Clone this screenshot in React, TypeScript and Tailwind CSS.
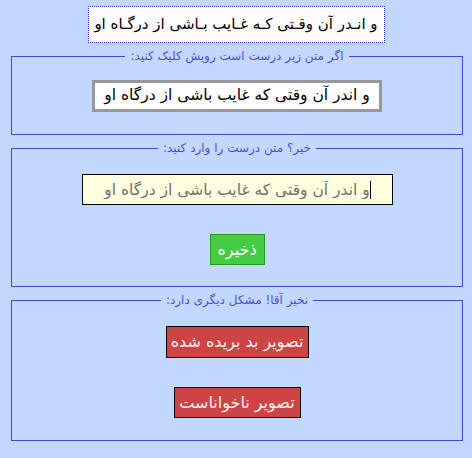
import React from "react";

export default function App() {
  return (
    <div
      dir="rtl"
      className="min-h-[458px] w-full bg-[#c3d8ff] pt-[6px] pb-[17px]"
      style={{ fontFamily: '"DejaVu Sans", Tahoma, sans-serif' }}
    >
      <div className="mx-auto flex h-[37px] w-[297px] items-center justify-center whitespace-nowrap border border-dotted border-[#2a2ae0] bg-white text-[15px] text-black">
        و انـدر آن وقـتی کـه غـایب بـاشی از درگـاه او
      </div>

      <fieldset className="mt-[7px] ml-[11px] mr-[9px] border border-[#4848d8] px-2 pt-[17px] pb-[22px]">
        <legend className="mx-auto px-[5px] text-[12px] leading-[13px] text-[#5050d0]">
          اگر متن زیر درست است رویش کلیک کنید:
        </legend>
        <div className="flex justify-center">
          <button className="flex h-[32px] w-[290px] items-center justify-center whitespace-nowrap border-[3px] border-[#999999] bg-white text-[15.5px] text-black">
            و اندر آن وقتی که غایب باشی از درگاه او
          </button>
        </div>
      </fieldset>

      <fieldset className="mt-[7px] ml-[11px] mr-[9px] border border-[#4848d8] px-2 pt-[19px] pb-[21px]">
        <legend className="mx-auto px-[5px] text-[12px] leading-[13px] text-[#5050d0]">
          خیر؟ متن درست را وارد کنید:
        </legend>
        <div className="flex flex-col items-center">
          <div className="relative">
            <input
              dir="rtl"
              defaultValue="و اندر آن وقتی که غایب باشی از درگاه او"
              className="h-[31px] w-[311px] border border-black bg-[#ffffe0] text-center text-[15.5px] text-[#707070] outline-none"
              style={{ fontFamily: '"DejaVu Sans", Tahoma, sans-serif' }}
            />
            <span className="absolute right-[22px] top-[7px] h-[18px] w-px bg-black" />
          </div>
          <button className="mt-[29px] flex h-[31px] w-[55px] items-center justify-center border border-[#20a020] bg-[#44cc44] text-[16px] text-white">
            ذخیره
          </button>
        </div>
      </fieldset>

      <fieldset className="mt-[7px] ml-[11px] mr-[9px] border border-[#4848d8] px-2 pt-[19px] pb-[22px]">
        <legend className="mx-auto px-[5px] text-[12px] leading-[13px] text-[#5050d0]">
          نخیر آقا! مشکل دیگری دارد:
        </legend>
        <div className="flex flex-col items-center">
          <button className="flex h-[32px] w-[143px] items-center justify-center whitespace-nowrap border border-black bg-[#cc4444] text-[16px] text-[#fff4f4]">
            تصویر بد بریده شده
          </button>
          <button className="mt-[29px] flex h-[31px] w-[127px] items-center justify-center whitespace-nowrap border border-black bg-[#cc4444] text-[16px] text-[#fff4f4]">
            تصویر ناخواناست
          </button>
        </div>
      </fieldset>
    </div>
  );
}
